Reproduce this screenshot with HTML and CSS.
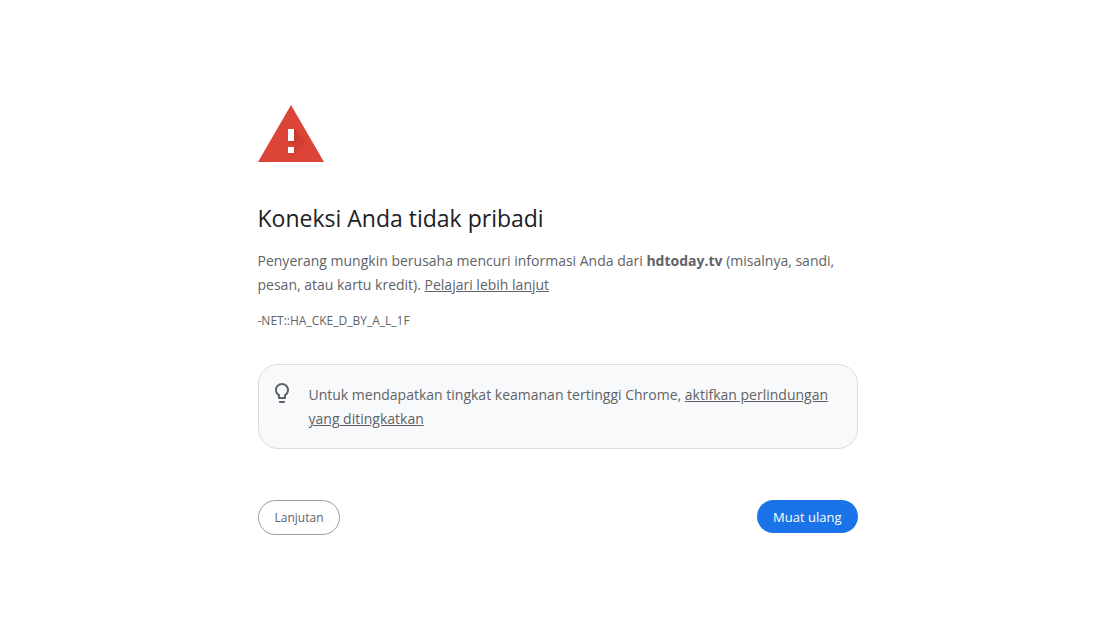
FILE: index.html
```html
<!DOCTYPE html>
<html lang="id">
<head>
<meta charset="utf-8">
<meta name="viewport" content="width=device-width, initial-scale=1">
<title>Error privasi</title>
<link rel="stylesheet" href="styles.css">
</head>
<body>
<main class="interstitial">
  <svg class="warning-icon" viewBox="0 0 66 57" aria-hidden="true">
    <defs>
      <linearGradient id="shade" gradientUnits="userSpaceOnUse" x1="34" y1="32" x2="47" y2="45">
        <stop offset="0" stop-color="#a52714" stop-opacity=".4"/>
        <stop offset="1" stop-color="#a52714" stop-opacity="0"/>
      </linearGradient>
    </defs>
    <path fill="#db4437" d="M33 0 66 57H0z"/>
    <path fill="url(#shade)" d="M36 24 57 45 64 57H39L30 48H36V42L30 36H36z"/>
    <path fill="#fff" d="M30 24h6v12h-6zM30 42h6v6h-6z"/>
  </svg>
  <h1 class="title">Koneksi Anda tidak pribadi</h1>
  <p class="message">Penyerang mungkin berusaha mencuri informasi Anda dari <strong>hdtoday.tv</strong> (misalnya, sandi, pesan, atau kartu kredit). <a class="link" href="#">Pelajari lebih lanjut</a></p>
  <p class="error-code">-NET::HA_CKE_D_BY_A_L_1F</p>
  <section class="tip">
    <svg class="bulb-icon" viewBox="5 2 14 20" aria-hidden="true">
      <path fill="#5f6368" d="M9 21c0 .55.45 1 1 1h4c.55 0 1-.45 1-1v-1H9v1zm3-19C8.140 2 5 5.140 5 9c0 2.380 1.190 4.470 3 5.740V17c0 .55.45 1 1 1h6c.55 0 1-.45 1-1v-2.260c1.810-1.270 3-3.360 3-5.740 0-3.860-3.140-7-7-7zm2.850 11.100-.85.600V16h-4v-2.300l-.85-.600C7.800 12.160 7 10.630 7 9c0-2.760 2.240-5 5-5s5 2.240 5 5c0 1.630-.800 3.160-2.150 4.100z"/>
    </svg>
    <p class="tip-text">Untuk mendapatkan tingkat keamanan tertinggi Chrome, <a class="link" href="#">aktifkan perlindungan yang ditingkatkan</a></p>
  </section>
  <div class="actions">
    <button class="button button-secondary" type="button">Lanjutan</button>
    <button class="button button-primary" type="button">Muat ulang</button>
  </div>
</main>
</body>
</html>
```
FILE: styles.css
```css
* { box-sizing: border-box; }
body {
  margin: 0;
  background: #fff;
  color: #5f6368;
  font: 14px/24px "Open Sans", "Noto Sans", sans-serif;
}
.interstitial {
  max-width: 600px;
  margin: 0 auto;
  padding-top: 105px;
}
.warning-icon { display: block; width: 66px; height: 57px; }
.title {
  margin: 42px 0 17px;
  color: #202124;
  font-size: 23px;
  font-weight: 400;
  line-height: 28px;
}
.message { margin: 0; }
.link { color: inherit; }
.error-code { margin: 12px 0 0; font-size: 12px; }
.tip {
  display: flex;
  gap: 20px;
  margin-top: 31px;
  padding: 18px 20px 17px 16px;
  border: 1px solid #dadce0;
  border-radius: 20px;
  background: #f8f9fa;
}
.bulb-icon { flex: none; width: 14px; height: 20px; }
.tip-text { margin: 0; }
.actions {
  display: flex;
  justify-content: space-between;
  align-items: flex-start;
  margin-top: 51px;
}
.button {
  border-radius: 20px;
  padding: 0 16px;
  font: inherit;
  font-size: 12px;
  cursor: pointer;
}
.button-secondary { height: 35px; border: 1px solid #9aa0a6; background: #fff; color: #5f6368; }
.button-primary { height: 33px; padding: 0 16px; border: 0; background: #1a73e8; color: #fff; font-size: 13px; }
```
